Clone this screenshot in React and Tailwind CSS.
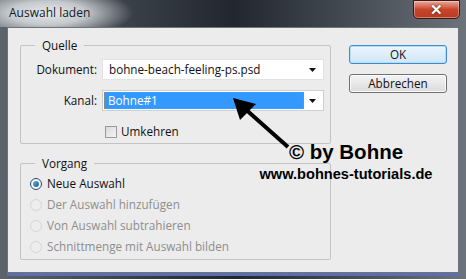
import React from 'react';

const ui = { fontFamily: '"Open Sans", "Noto Sans", Arial, sans-serif' };

const Arrow = () => (
  <svg width="9" height="6" viewBox="0 0 9 6">
    <path d="M1 1 H8 L4.5 5 Z" fill="#111" />
  </svg>
);

const Radio = ({ checked, label }) => (
  <div className="flex items-center gap-[5px] h-[21px]">
    <span
      className={`w-[12px] h-[12px] rounded-full border flex items-center justify-center ${
        checked ? 'border-[#2b4d6e] bg-[#f4f4f4]' : 'border-[#d6d6d6] bg-[#ededed]'
      }`}
    >
      {checked && <span className="w-[6px] h-[6px] rounded-full bg-gradient-to-br from-[#5fb1e8] to-[#1c5a98]" />}
    </span>
    <span className={checked ? 'text-[#111]' : 'text-[#8e8e8e]'}>{label}</span>
  </div>
);

const Group = ({ title, className, children }) => (
  <div className={`relative border border-[#c3c3c3] rounded-[2px] ${className}`}>
    <span className="absolute -top-[9px] left-[14px] px-[7px] bg-[#ececec] leading-[16px] text-[#111]">{title}</span>
    {children}
  </div>
);

export default function App() {
  return (
    <div
      className="w-[466px] h-[279px] overflow-hidden relative flex flex-col bg-gradient-to-r from-[#5c636b] via-[#22272f] to-[#6c737b] text-[11.7px]"
      style={ui}
    >
      {/* Title bar */}
      <div className="h-[27px] flex items-start justify-between bg-[radial-gradient(ellipse_85px_26px_at_48px_13px,rgba(236,239,241,0.97)_0%,rgba(225,229,232,0.8)_45%,rgba(200,205,210,0)_100%)]">
        <div className="ml-[9px] mt-[4px] h-[18px] flex items-center text-[#141a28] text-[12px]">
          Auswahl laden
        </div>
        <div className="mr-[6px] w-[47px] h-[19px] rounded-b-[5px] border border-[#3b1a14] bg-gradient-to-b from-[#e8a89a] via-[#c8452c] to-[#b83a22] flex items-center justify-center shadow-[inset_0_0_0_1px_rgba(255,255,255,0.35)]">
          <span
            className="text-white font-bold text-[15px] leading-none"
            style={{ fontFamily: '"Liberation Sans", Arial, sans-serif', textShadow: '0 0 2px #3a1208' }}
          >
            ✕
          </span>
        </div>
      </div>

      {/* Client area */}
      <div className="mx-[7px] mb-[6px] flex-1 border border-[#6e747a] bg-[#ececec] flex pl-[12px] pt-[17px] relative shadow-[0_3px_0_0_#5a6fae]">
        <div className="flex flex-col gap-[19px] w-[311px]">
          <Group title="Quelle" className="h-[99px]">
            <div className="flex flex-col pt-[13px] pr-[6px]">
              <div className="flex items-center h-[21px]">
                <span className="w-[76px] text-right text-[#111]">Dokument:</span>
                <div className="ml-[5px] flex-1 h-[21px] bg-white border border-[#e2e2e2] flex items-center pl-[6px] pr-[6px] justify-between">
                  <span className="text-[#111]">bohne-beach-feeling-ps.psd</span>
                  <Arrow />
                </div>
              </div>
              <div className="flex items-center h-[21px] mt-[10px]">
                <span className="w-[76px] text-right text-[#111]">Kanal:</span>
                <div className="ml-[5px] flex-1 h-[21px] bg-white border border-[#cfcfcf] flex items-center p-[1px] pr-[6px] justify-between">
                  <span className="h-full w-[200px] bg-[#3399ff] border border-dotted border-[#d0812f] text-white flex items-center pl-[3px] leading-none">
                    Bohne#1
                  </span>
                  <Arrow />
                </div>
              </div>
              <div className="flex items-center gap-[4px] ml-[84px] mt-[12px]">
                <span className="w-[12px] h-[12px] border border-[#9a9a9a] bg-gradient-to-br from-[#d8d8d8] to-[#f6f6f6]" />
                <span className="text-[#111]">Umkehren</span>
              </div>
            </div>
          </Group>
          <Group title="Vorgang" className="h-[97px]">
            <div className="flex flex-col pt-[9px] pl-[9px]">
              <Radio checked label="Neue Auswahl" />
              <Radio label="Der Auswahl hinzufügen" />
              <Radio label="Von Auswahl subtrahieren" />
              <Radio label="Schnittmenge mit Auswahl bilden" />
            </div>
          </Group>
        </div>

        <div className="ml-[18px] flex flex-col gap-[10px] w-[98px]">
          <button className="h-[19px] rounded-[3px] border border-[#3c8ccf] bg-gradient-to-b from-[#ecf5fc] to-[#cfe6f7] text-[#111] shadow-[inset_0_0_0_1px_#b6dcf6] leading-none">
            OK
          </button>
          <button className="h-[19px] rounded-[3px] border border-[#707070] bg-gradient-to-b from-[#f4f4f4] to-[#dcdcdc] text-[#111] shadow-[inset_0_0_0_1px_#fbfbfb] leading-none">
            Abbrechen
          </button>
        </div>

        {/* Watermark + arrow overlay */}
        <svg className="absolute left-[217px] top-[62px]" width="66" height="60" viewBox="0 0 66 60">
          <line x1="63" y1="57" x2="18" y2="17" stroke="#000" strokeWidth="4" />
          <path d="M8 8 L31 14 L15 30 Z" fill="#000" />
        </svg>
        <div
          className="absolute left-[240px] top-[114px] w-[196px] flex flex-col items-center font-bold text-black leading-none"
          style={{ fontFamily: '"Liberation Sans", Arial, sans-serif' }}
        >
          <span className="text-[20.5px]">© by Bohne</span>
          <span className="text-[14.6px] mt-[4px]">www.bohnes-tutorials.de</span>
        </div>
      </div>
    </div>
  );
}
